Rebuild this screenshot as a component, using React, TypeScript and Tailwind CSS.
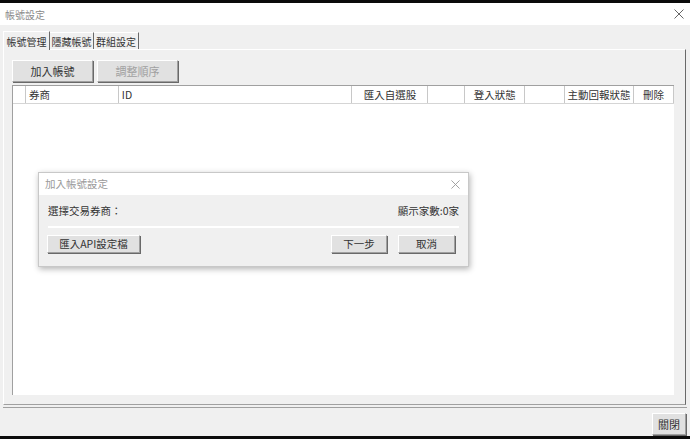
import React from "react";

const font = { fontFamily: '"Noto Sans CJK TC", "Noto Sans CJK SC", "Liberation Sans", sans-serif' };

function XIcon({ size, color }: { size: number; color: string }) {
  return (
    <svg width={size} height={size} viewBox="0 0 10 10">
      <path d="M0.5 0.5 L9.5 9.5 M9.5 0.5 L0.5 9.5" stroke={color} strokeWidth="1" fill="none" />
    </svg>
  );
}

function Btn({ children, w, disabled }: { children: React.ReactNode; w: string; disabled?: boolean }) {
  return (
    <div
      className={`${w} h-[22px] flex items-center justify-center bg-[#e1e1e1] border border-t-white border-l-white border-r-[#a0a0a0] border-b-[#a0a0a0] shadow-[1px_1px_0_#696969] text-[11px] ${disabled ? "text-[#a0a0a0]" : "text-[#333]"}`}
    >
      {children}
    </div>
  );
}

const cols: { w: string; label: string; align: string }[] = [
  { w: "w-[13px]", label: "", align: "justify-start" },
  { w: "w-[93px]", label: "券商", align: "justify-start pl-[3px]" },
  { w: "w-[234px]", label: "ID", align: "justify-start pl-[3px]" },
  { w: "w-[76px]", label: "匯入自選股", align: "justify-center" },
  { w: "w-[37px]", label: "", align: "justify-center" },
  { w: "w-[60px]", label: "登入狀態", align: "justify-center" },
  { w: "w-[40px]", label: "", align: "justify-center" },
  { w: "w-[69px]", label: "主動回報狀態", align: "justify-center" },
  { w: "w-[40px]", label: "刪除", align: "justify-center" },
];

const dbtn =
  "h-[18px] flex items-center justify-center bg-[#e1e1e1] border border-t-white border-l-white border-r-[#a0a0a0] border-b-[#a0a0a0] shadow-[1px_1px_0_#696969] text-[10.5px] text-[#333]";

export default function App() {
  return (
    <div className="relative w-[690px] h-[439px] bg-[#f0f0f0] flex flex-col overflow-hidden text-[#333]" style={font}>
      <div className="h-[3px] bg-[#0b0b0b] shrink-0" />
      <div className="h-[22px] bg-white flex items-center justify-between pl-[5px] pr-[6px] shrink-0">
        <span className="text-[10px] text-[#8a8a8a]">帳號設定</span>
        <XIcon size={10} color="#666" />
      </div>
      <div className="flex-1 flex flex-col px-[3px] pt-[6px]">
        <div className="flex h-[18px] items-end text-[10px]">
          <div className="w-[47px] h-[19px] flex items-center justify-center bg-[#f0f0f0] border-t border-l border-r border-t-white border-l-white border-r-[#696969] relative z-10 mb-[-1px]">帳號管理</div>
          <div className="w-[44px] h-[17px] flex items-center justify-center border-t border-r border-t-white border-r-[#696969]">隱藏帳號</div>
          <div className="w-[45px] h-[17px] flex items-center justify-center border-t border-r border-t-white border-r-[#696969]">群組設定</div>
        </div>
        <div className="h-[356px] w-[683px] border border-t-white border-l-white border-r-[#696969] border-b-[#a0a0a0] pl-[8px] pt-[10px] flex flex-col">
          <div className="flex gap-[4px]">
            <Btn w="w-[81px]">加入帳號</Btn>
            <Btn w="w-[81px]" disabled>
              調整順序
            </Btn>
          </div>
          <div className="mt-[3px] w-[662px] h-[310px] bg-white border-l border-t border-[#a0a0a0] flex flex-col">
            <div className="flex h-[18px] border-b border-[#d5d5d5] text-[10.5px]">
              {cols.map((c, i) => (
                <div key={i} className={`${c.w} h-full flex items-center ${c.align} border-r border-[#c8c8c8] bg-white`}>
                  {c.label}
                </div>
              ))}
            </div>
          </div>
        </div>
        <div className="mt-[2px] border-t border-[#a0a0a0] flex justify-end pt-[5px] pr-[1px]">
          <Btn w="w-[34px]">關閉</Btn>
        </div>
      </div>
      <div className="h-[3px] bg-[#0b0b0b] shrink-0" />

      {/* dialog */}
      <div className="absolute left-[38px] top-[172px] w-[431px] h-[95px] bg-[#f0f0f0] border border-[#c8c8c8] shadow-[1px_2px_6px_rgba(0,0,0,0.3)] flex flex-col">
        <div className="h-[22px] bg-white flex items-center justify-between pl-[6px] pr-[8px]">
          <span className="text-[10.5px] text-[#9a9a9a]">加入帳號設定</span>
          <XIcon size={9} color="#999" />
        </div>
        <div className="flex justify-between items-center px-[9px] pt-[8px] text-[10.5px]">
          <span>選擇交易券商：</span>
          <span>顯示家數:0家</span>
        </div>
        <div className="mx-[9px] mt-[7px] h-[2px] bg-white" />
        <div className="flex items-center justify-between pl-[8px] pr-[13px] mt-[7px]">
          <div className={`w-[93px] ${dbtn}`}>匯入API設定檔</div>
          <div className="flex gap-[11px]">
            <div className={`w-[56px] ${dbtn}`}>下一步</div>
            <div className={`w-[57px] ${dbtn}`}>取消</div>
          </div>
        </div>
      </div>
    </div>
  );
}
